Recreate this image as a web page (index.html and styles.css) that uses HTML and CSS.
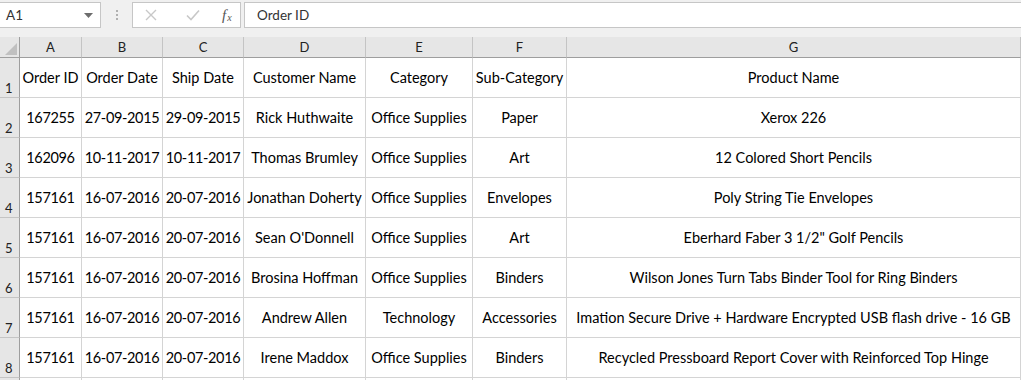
FILE: index.html
```html
<!DOCTYPE html>
<html>
<head>
<meta charset="utf-8">
<link rel="stylesheet" href="styles.css">
</head>
<body>
<div class="app">
  <div class="fbar">
    <div class="namebox"><span class="ref">A1</span><svg class="caret" width="9" height="5" viewBox="0 0 9 5"><path d="M0 0H9L4.5 5Z" fill="#6d6d6d"/></svg></div>
    <div class="grip"><i></i><i></i><i></i></div>
    <div class="fxbox">
      <svg class="ic" width="12" height="12" viewBox="0 0 12 12"><path d="M1 1L11 11M11 1L1 11" stroke="#c8c8c8" stroke-width="1.4" fill="none"/></svg>
      <svg class="ic" width="14" height="12" viewBox="0 0 14 12"><path d="M1 6.5L5 10.5L13 1.5" stroke="#c8c8c8" stroke-width="1.6" fill="none"/></svg>
      <span class="fx">f<sub>x</sub></span>
    </div>
    <div class="finput">Order ID</div>
  </div>
  <div class="sheet">
    <div class="corner"><svg width="12" height="12" viewBox="0 0 12 12"><path d="M12 0V12H0Z" fill="#c0c0c0"/></svg></div>
    <div class="ch">A</div><div class="ch">B</div><div class="ch">C</div><div class="ch">D</div><div class="ch">E</div><div class="ch">F</div><div class="ch">G</div>

    <div class="rh">1</div>
    <div class="c">Order ID</div><div class="c">Order Date</div><div class="c">Ship Date</div><div class="c">Customer Name</div><div class="c">Category</div><div class="c">Sub-Category</div><div class="c">Product Name</div>

    <div class="rh">2</div>
    <div class="c n">167255</div><div class="c n">27-09-2015</div><div class="c n">29-09-2015</div><div class="c">Rick Huthwaite</div><div class="c">Office Supplies</div><div class="c">Paper</div><div class="c">Xerox 226</div>

    <div class="rh">3</div>
    <div class="c n">162096</div><div class="c n">10-11-2017</div><div class="c n">10-11-2017</div><div class="c">Thomas Brumley</div><div class="c">Office Supplies</div><div class="c">Art</div><div class="c">12 Colored Short Pencils</div>

    <div class="rh">4</div>
    <div class="c n">157161</div><div class="c n">16-07-2016</div><div class="c n">20-07-2016</div><div class="c">Jonathan Doherty</div><div class="c">Office Supplies</div><div class="c">Envelopes</div><div class="c">Poly String Tie Envelopes</div>

    <div class="rh">5</div>
    <div class="c n">157161</div><div class="c n">16-07-2016</div><div class="c n">20-07-2016</div><div class="c">Sean O'Donnell</div><div class="c">Office Supplies</div><div class="c">Art</div><div class="c">Eberhard Faber 3 1/2" Golf Pencils</div>

    <div class="rh">6</div>
    <div class="c n">157161</div><div class="c n">16-07-2016</div><div class="c n">20-07-2016</div><div class="c">Brosina Hoffman</div><div class="c">Office Supplies</div><div class="c">Binders</div><div class="c">Wilson Jones Turn Tabs Binder Tool for Ring Binders</div>

    <div class="rh">7</div>
    <div class="c n">157161</div><div class="c n">16-07-2016</div><div class="c n">20-07-2016</div><div class="c">Andrew Allen</div><div class="c">Technology</div><div class="c">Accessories</div><div class="c">Imation Secure Drive + Hardware Encrypted USB flash drive - 16 GB</div>

    <div class="rh">8</div>
    <div class="c n">157161</div><div class="c n">16-07-2016</div><div class="c n">20-07-2016</div><div class="c">Irene Maddox</div><div class="c">Office Supplies</div><div class="c">Binders</div><div class="c">Recycled Pressboard Report Cover with Reinforced Top Hinge</div>

    <div class="rh"></div>
    <div class="c"></div><div class="c"></div><div class="c"></div><div class="c"></div><div class="c"></div><div class="c"></div><div class="c"></div>
  </div>
</div>
</body>
</html>
```

FILE: styles.css
```css
* { box-sizing: border-box; }
html, body { margin: 0; padding: 0; }
body {
  width: 1021px;
  height: 380px;
  overflow: hidden;
  background: #ffffff;
  font-family: "Lato", "Liberation Sans", sans-serif;
}
.app { width: 1021px; height: 380px; overflow: hidden; }
.fbar {
  height: 37px;
  background: #f0f0f0;
  display: flex;
  align-items: flex-start;
  padding-top: 2px;
}
.namebox {
  width: 101px;
  height: 26px;
  background: #fff;
  border: 1px solid #c6c6c6;
  border-left: none;
  display: flex;
  align-items: center;
  justify-content: space-between;
  padding: 0 7px 0 6px;
  font-size: 13.5px;
  color: #333;
}
.caret { margin-top: 1px; }
.grip {
  width: 31px;
  height: 26px;
  display: flex;
  flex-direction: column;
  align-items: center;
  justify-content: center;
  gap: 2px;
}
.grip i { display: block; width: 2px; height: 2px; background: #b0b0b0; }
.fxbox {
  width: 109px;
  height: 26px;
  background: #fff;
  border: 1px solid #c6c6c6;
  display: flex;
  align-items: center;
  padding-left: 12px;
}
.fxbox .ic:nth-child(1) { margin-right: 29px; }
.fxbox .ic:nth-child(2) { margin-right: 22px; }
.fx {
  font-family: "Liberation Serif", serif;
  font-style: italic;
  font-size: 15px;
  color: #555;
  line-height: 1;
  letter-spacing: 1px;
}
.fx sub { font-size: 10px; vertical-align: -1px; }
.finput {
  margin-left: 3px;
  flex: 1;
  height: 26px;
  background: #fff;
  border: 1px solid #c6c6c6;
  border-right: none;
  display: flex;
  align-items: center;
  padding-left: 12px;
  font-size: 13.5px;
  color: #333;
}
.sheet {
  display: grid;
  grid-template-columns: 20px 62px 81px 81px 122px 107px 94px 454px;
  grid-template-rows: 21px repeat(9, 40px);
}
.corner, .ch {
  background: #e6e6e6;
  border-bottom: 1px solid #9e9e9e;
  border-right: 1px solid #c4c4c4;
}
.corner {
  border-right: 1px solid #9e9e9e;
  display: flex;
  align-items: flex-end;
  justify-content: flex-end;
  padding: 0 2px 2px 0;
}
.ch {
  display: flex;
  align-items: center;
  justify-content: center;
  font-size: 13px;
  color: #222;
}
.rh {
  background: #e6e6e6;
  border-right: 1px solid #9e9e9e;
  border-bottom: 1px solid #c4c4c4;
  display: flex;
  align-items: flex-end;
  padding: 0 0 1px 5px;
  font-size: 13px;
  color: #222;
}
.c {
  border-right: 1px solid #d4d4d4;
  border-bottom: 1px solid #d4d4d4;
  display: flex;
  align-items: center;
  justify-content: center;
  white-space: nowrap;
  overflow: hidden;
  font-size: 14.5px;
  color: #000;
}
.c.n { letter-spacing: -0.35px; }
```
